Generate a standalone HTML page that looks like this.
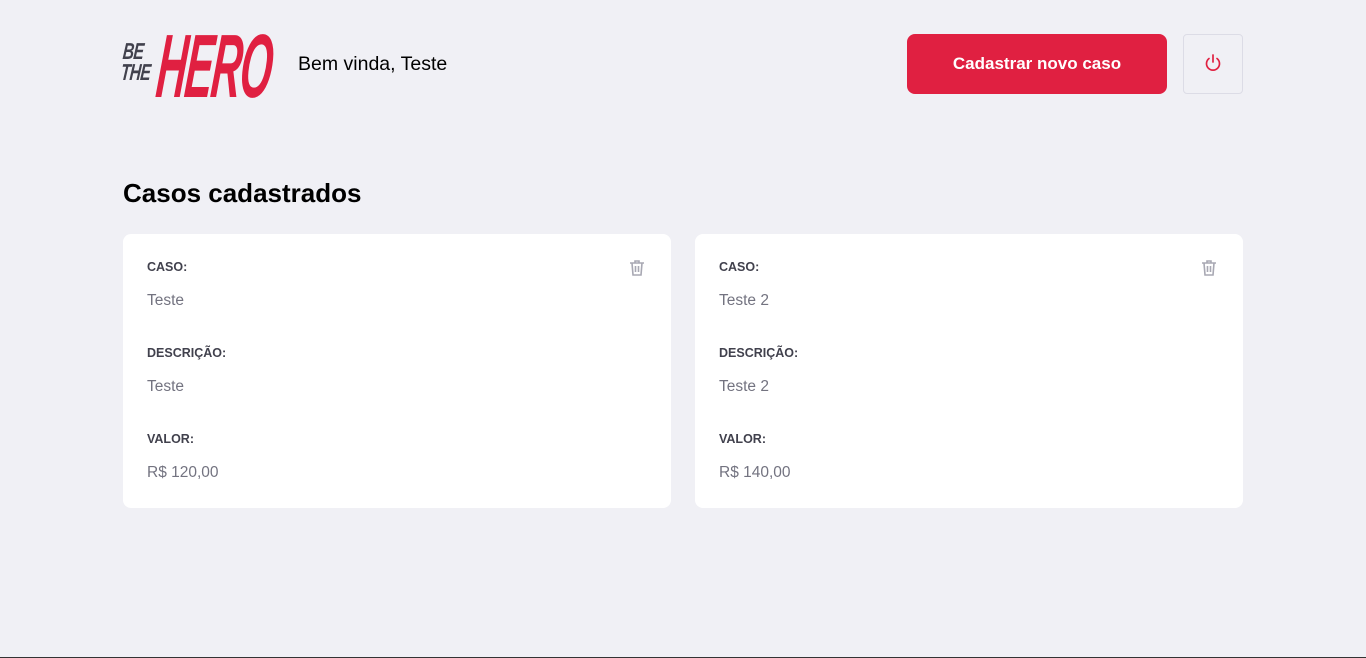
<!DOCTYPE html>
<html><head><style>
body{margin:0;width:1366px;height:658px;background:#f0f0f5;font-family:"Liberation Sans",sans-serif;position:relative;overflow:hidden}
.a{position:absolute}
.be{left:124px;top:41px;font-weight:900;font-style:italic;font-size:23px;line-height:21px;color:#41414d;transform:scaleX(.68) skewX(-8deg);transform-origin:left top;letter-spacing:-1px}
.hero{left:162px;top:22px;font-weight:900;font-style:italic;font-size:90px;line-height:90px;color:#e02041;transform:scaleX(.46) skewX(-12deg);transform-origin:left top;letter-spacing:-3px}
.card{background:#fff;border-radius:8px;top:234px;width:548px;height:274px}
.l{position:absolute;left:24px;font-size:12.5px;font-weight:bold;color:#41414d}
.v{position:absolute;left:24px;font-size:15.5px;color:#737380}
.t{position:absolute;right:24px;top:24px}
</style></head><body>
<div class="a be">BE<br>THE</div>
<div class="a hero">HERO</div>
<div class="a" style="left:298px;top:53px;font-size:19.5px;color:#000">Bem vinda, Teste</div>
<div class="a" style="left:907px;top:34px;width:260px;height:60px;background:#e02041;border-radius:8px;color:#fff;font-weight:bold;font-size:17px;line-height:60px;text-align:center">Cadastrar novo caso</div>
<div class="a" style="left:1183px;top:34px;width:58px;height:58px;border:1px solid #dcdce6;border-radius:4px">
<svg width="58" height="58" viewBox="0 0 58 58"><g fill="none" stroke="#e02041" stroke-width="1.7" stroke-linecap="round"><path d="M29 20v7"/><path d="M25 23.5a6.5 6.5 0 1 0 8 0"/></g></svg></div>
<div class="a" style="left:123px;top:178px;font-size:26px;font-weight:bold;color:#000">Casos cadastrados</div>
<div class="a card" style="left:123px">
<div class="l" style="top:26px">CASO:</div><div class="v" style="top:58px">Teste</div>
<div class="l" style="top:112px">DESCRIÇÃO:</div><div class="v" style="top:144px">Teste</div>
<div class="l" style="top:198px">VALOR:</div><div class="v" style="top:230px">R$ 120,00</div>
<svg class="t" width="20" height="20" viewBox="0 0 20 20"><g fill="none" stroke="#a8a8b3" stroke-width="1.6"><path d="M3 5h14M8 5V3h4v2M5 5l1 12h8l1-12M8.5 8v6M11.5 8v6"/></g></svg>
</div>
<div class="a card" style="left:695px">
<div class="l" style="top:26px">CASO:</div><div class="v" style="top:58px">Teste 2</div>
<div class="l" style="top:112px">DESCRIÇÃO:</div><div class="v" style="top:144px">Teste 2</div>
<div class="l" style="top:198px">VALOR:</div><div class="v" style="top:230px">R$ 140,00</div>
<svg class="t" width="20" height="20" viewBox="0 0 20 20"><g fill="none" stroke="#a8a8b3" stroke-width="1.6"><path d="M3 5h14M8 5V3h4v2M5 5l1 12h8l1-12M8.5 8v6M11.5 8v6"/></g></svg>
</div>
<div class="a" style="left:0;top:657px;width:1366px;height:1px;background:#333"></div>
</body></html>
